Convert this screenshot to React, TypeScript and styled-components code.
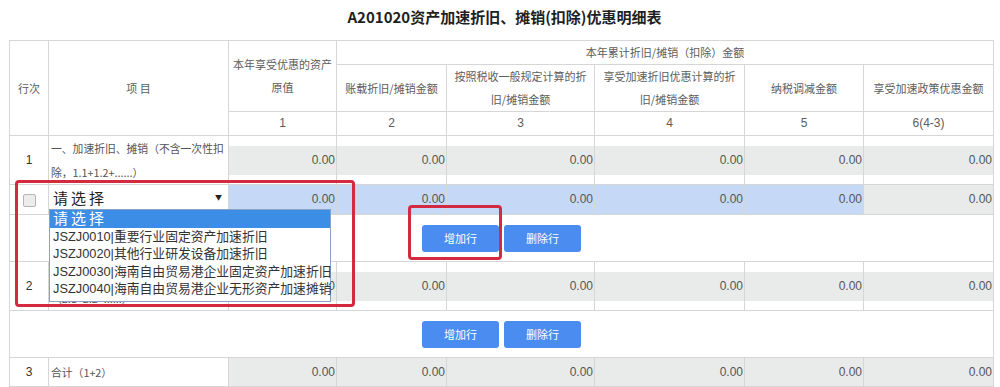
import { createGlobalStyle, styled } from 'styled-components';

const GlobalStyle = createGlobalStyle`
  html, body {
    margin: 0;
    padding: 0;
    background: #fff;
  }
  body {
    font-family: 'Noto Sans CJK SC', 'Liberation Sans', sans-serif;
  }
`;

const Page = styled.div`
  position: relative;
  width: 1000px;
  height: 387px;
  padding-left: 9px;
  box-sizing: border-box;
  overflow: hidden;
`;

const Title = styled.h1`
  margin: 0;
  height: 40px;
  line-height: 34px;
  text-align: center;
  font-size: 15px;
  font-weight: bold;
  color: #1f1f1f;
  font-family: 'Noto Sans CJK SC', sans-serif;
`;

const Table = styled.table`
  width: 984px;
  table-layout: fixed;
  border-collapse: collapse;
  font-size: 11px;
  color: #5a5a5a;
`;

const Th = styled.th`
  border: 1px solid #d6d6d6;
  font-weight: normal;
  padding: 0 3px;
  line-height: 23px;
  text-align: center;
  vertical-align: middle;
  color: #5c5c5c;
`;

const NumTh = styled(Th)`
  font-family: 'Liberation Sans', sans-serif;
  font-size: 12px;
`;

const Row = styled.tr<{ $h: number }>`
  height: ${(p) => p.$h}px;
`;

const Td = styled.td`
  border: 1px solid #d6d6d6;
  padding: 0;
  vertical-align: middle;
`;

const LineNo = styled(Td)`
  text-align: center;
  font-family: 'Liberation Sans', sans-serif;
  font-size: 12px;
  color: #333;
`;

const Item = styled(Td)`
  padding: 0 0 0 2px;
  line-height: 24px;
  font-size: 10.8px;
  color: #555;
`;

const ValueCell = styled(Td)<{ $pad: number; $bg: string }>`
  padding: ${(p) => p.$pad}px 0;
  background: ${(p) => (p.$bg === 'blue' ? '#c5d9f6' : '#fff')};
`;

const Value = styled.div<{ $bg: string; $h: number }>`
  height: ${(p) => p.$h}px;
  line-height: ${(p) => p.$h}px;
  text-align: right;
  padding-right: 1px;
  background: ${(p) => (p.$bg === 'blue' ? '#c5d9f6' : '#e8ebea')};
  font-family: 'Liberation Sans', sans-serif;
  font-size: 12px;
  color: #555;
`;

const Check = styled.span`
  display: inline-block;
  width: 11px;
  height: 11px;
  border: 1px solid #b5b5b5;
  border-radius: 2px;
  background: #ececec;
  vertical-align: middle;
`;

const SelectCell = styled(Td)`
  vertical-align: top;
`;

const SelectBox = styled.div`
  position: relative;
  height: 24px;
  display: flex;
  align-items: center;
  justify-content: space-between;
  padding: 0 6px 0 4px;
  background: #fff;
  font-size: 15px;
  letter-spacing: 3px;
  color: #222;
`;

const Arrow = styled.span`
  font-size: 7px;
  letter-spacing: 0;
  color: #222;
`;

const OptionList = styled.ul`
  position: absolute;
  top: 24px;
  left: 0;
  width: 282px;
  margin: 0;
  padding: 0 0 3px;
  list-style: none;
  background: #fff;
  border: 1px solid #8aa2c4;
  box-sizing: border-box;
  z-index: 2;
`;

const Option = styled.li<{ $active?: boolean }>`
  height: 17.6px;
  line-height: 17.6px;
  padding-left: 3px;
  white-space: nowrap;
  font-family: 'Liberation Sans', 'Noto Sans CJK SC', sans-serif;
  font-size: ${(p) => (p.$active ? '15px' : '12.8px')};
  letter-spacing: ${(p) => (p.$active ? '3px' : '0')};
  background: ${(p) => (p.$active ? '#3b8de6' : 'transparent')};
  color: ${(p) => (p.$active ? '#fff' : '#333')};
`;

const ButtonCell = styled.td`
  border: 1px solid #d6d6d6;
  padding: 0;
`;

const ButtonBar = styled.div`
  display: flex;
  justify-content: center;
  gap: 5px;
`;

const Button = styled.button`
  width: 77px;
  height: 27px;
  border: none;
  border-radius: 3px;
  background: #4a8cf0;
  color: #fff;
  font-size: 11px;
  font-family: 'Noto Sans CJK SC', sans-serif;
  cursor: pointer;
`;

const Mark = styled.div`
  position: absolute;
  border: 3px solid #d42a40;
  border-radius: 4px;
  box-sizing: border-box;
  pointer-events: none;
  z-index: 3;
`;

const SUB_HEADERS = [
  '账载折旧/摊销金额',
  '按照税收一般规定计算的折旧/摊销金额',
  '享受加速折旧优惠计算的折旧/摊销金额',
  '纳税调减金额',
  '享受加速政策优惠金额',
];
const COL_NUMS = ['1', '2', '3', '4', '5', '6(4-3)'];
const WIDTHS = [39, 180, 108, 110, 148, 150, 119, 130];
const OPTIONS = [
  'JSZJ0010|重要行业固定资产加速折旧',
  'JSZJ0020|其他行业研发设备加速折旧',
  'JSZJ0030|海南自由贸易港企业固定资产加速折旧',
  'JSZJ0040|海南自由贸易港企业无形资产加速摊销',
];

const Values = ({ pad, h, blue }: { pad: number; h: number; blue?: number }) => (
  <>
    {COL_NUMS.map((_, i) => {
      const bg = blue !== undefined && i < blue ? 'blue' : 'gray';
      return (
        <ValueCell key={i} $pad={pad} $bg={bg}>
          <Value $bg={bg} $h={h}>
            0.00
          </Value>
        </ValueCell>
      );
    })}
  </>
);

const Buttons = () => (
  <Row $h={47}>
    <ButtonCell colSpan={8}>
      <ButtonBar>
        <Button>增加行</Button>
        <Button>删除行</Button>
      </ButtonBar>
    </ButtonCell>
  </Row>
);

const App = () => (
  <Page>
    <GlobalStyle />
    <Title>A201020资产加速折旧、摊销(扣除)优惠明细表</Title>
    <Table>
      <colgroup>
        {WIDTHS.map((w, i) => (
          <col key={i} style={{ width: w }} />
        ))}
      </colgroup>
      <thead>
        <Row $h={24}>
          <Th rowSpan={3}>行次</Th>
          <Th rowSpan={3}>项 目</Th>
          <Th rowSpan={2}>本年享受优惠的资产原值</Th>
          <Th colSpan={5}>本年累计折旧/摊销（扣除）金额</Th>
        </Row>
        <Row $h={46}>
          {SUB_HEADERS.map((t) => (
            <Th key={t}>{t}</Th>
          ))}
        </Row>
        <Row $h={24}>
          {COL_NUMS.map((n) => (
            <NumTh key={n}>{n}</NumTh>
          ))}
        </Row>
      </thead>
      <tbody>
        <Row $h={47}>
          <LineNo>1</LineNo>
          <Item>一、加速折旧、摊销（不含一次性扣除，1.1+1.2+......）</Item>
          <Values pad={9} h={29} />
        </Row>
        <Row $h={30}>
          <LineNo>
            <Check />
          </LineNo>
          <SelectCell>
            <SelectBox>
              请选择
              <Arrow>▼</Arrow>
              <OptionList>
                <Option $active>请选择</Option>
                {OPTIONS.map((o) => (
                  <Option key={o}>{o}</Option>
                ))}
              </OptionList>
            </SelectBox>
          </SelectCell>
          <Values pad={0} h={29} blue={5} />
        </Row>
        <Buttons />
        <Row $h={47}>
          <LineNo>2</LineNo>
          <Item>二、固定资产一次性扣除（2.1+2.2+......）</Item>
          <Values pad={9} h={29} />
        </Row>
        <Buttons />
        <Row $h={29}>
          <LineNo>3</LineNo>
          <Item>合计（1+2）</Item>
          <Values pad={0} h={28} />
        </Row>
      </tbody>
    </Table>
    <Mark style={{ left: 15, top: 180, width: 340, height: 127 }} />
    <Mark style={{ left: 408, top: 205, width: 94, height: 55 }} />
  </Page>
);

export default App;
